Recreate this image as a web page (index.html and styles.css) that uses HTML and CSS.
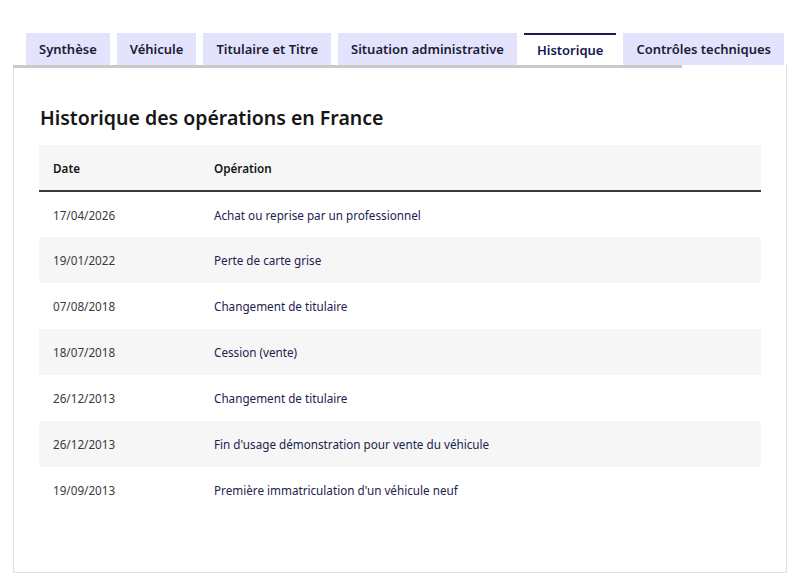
FILE: index.html
```html
<!DOCTYPE html>
<html lang="fr">
<head>
<meta charset="utf-8">
<title>Historique</title>
<link rel="stylesheet" href="styles.css">
</head>
<body>
<div class="wrap">
  <ul class="tabs">
    <li class="tab">Synthèse</li>
    <li class="tab">Véhicule</li>
    <li class="tab">Titulaire et Titre</li>
    <li class="tab">Situation administrative</li>
    <li class="tab active">Historique</li>
    <li class="tab">Contrôles techniques</li>
  </ul>
  <div class="panel">
    <div class="bar"></div>
    <h2 class="title">Historique des opérations en France</h2>
    <table class="table">
      <thead>
        <tr><th class="c-date">Date</th><th>Opération</th></tr>
      </thead>
      <tbody>
        <tr><td class="c-date">17/04/2026</td><td class="op">Achat ou reprise par un professionnel</td></tr>
        <tr><td class="c-date">19/01/2022</td><td class="op">Perte de carte grise</td></tr>
        <tr><td class="c-date">07/08/2018</td><td class="op">Changement de titulaire</td></tr>
        <tr><td class="c-date">18/07/2018</td><td class="op">Cession (vente)</td></tr>
        <tr><td class="c-date">26/12/2013</td><td class="op">Changement de titulaire</td></tr>
        <tr><td class="c-date">26/12/2013</td><td class="op">Fin d'usage démonstration pour vente du véhicule</td></tr>
        <tr><td class="c-date">19/09/2013</td><td class="op">Première immatriculation d'un véhicule neuf</td></tr>
      </tbody>
    </table>
  </div>
</div>
</body>
</html>
```
FILE: styles.css
```css
* { box-sizing: border-box; }
html, body { margin: 0; padding: 0; background: #fff; }
body { font-family: "Noto Sans", "DejaVu Sans", sans-serif; color: #161616; }
.wrap { padding: 33px 13px 0 13px; width: 800px; }
.tabs {
  list-style: none; margin: 0; padding: 0 0 0 13px;
  display: flex; gap: 7px; height: 32px;
}
.tab {
  flex: none; white-space: nowrap;
  background: #e3e3fd; color: #1b1b35;
  font-size: 13px; font-weight: 600;
  height: 32px; line-height: 32px;
  padding: 0 13px;
}
.tab.active {
  background: #fff; color: #161650;
  border-top: 2px solid #1b1b50;
  line-height: 30px;
}
.panel {
  border: 1px solid #e0e0e0; border-top: none;
  height: 508px; width: 774px;
  box-shadow: 0 1px 1px rgba(0,0,0,0.04);
}
.bar { height: 3px; width: 669px; background: #c9c9c9; margin-left: -1px; }
.title {
  margin: 36px 0 0 26px;
  font-size: 19.5px; font-weight: 600; line-height: 28px; color: #161616;
}
.table {
  margin: 13px 0 0 25px; width: 722px;
  border-collapse: collapse; font-size: 11.7px;
}
.table th {
  background: #f6f6f6; text-align: left; font-weight: 600;
  height: 46px; padding: 0 14px; border-bottom: 2px solid #3a3a3a;
  color: #161616;
}
.table td { height: 46px; padding: 0 14px; color: #3a3a3a; }
.table .c-date { width: 161px; }
.table td.op { color: #22224e; }
.table tbody tr:nth-child(even) td { background: #f6f6f6; }
```
